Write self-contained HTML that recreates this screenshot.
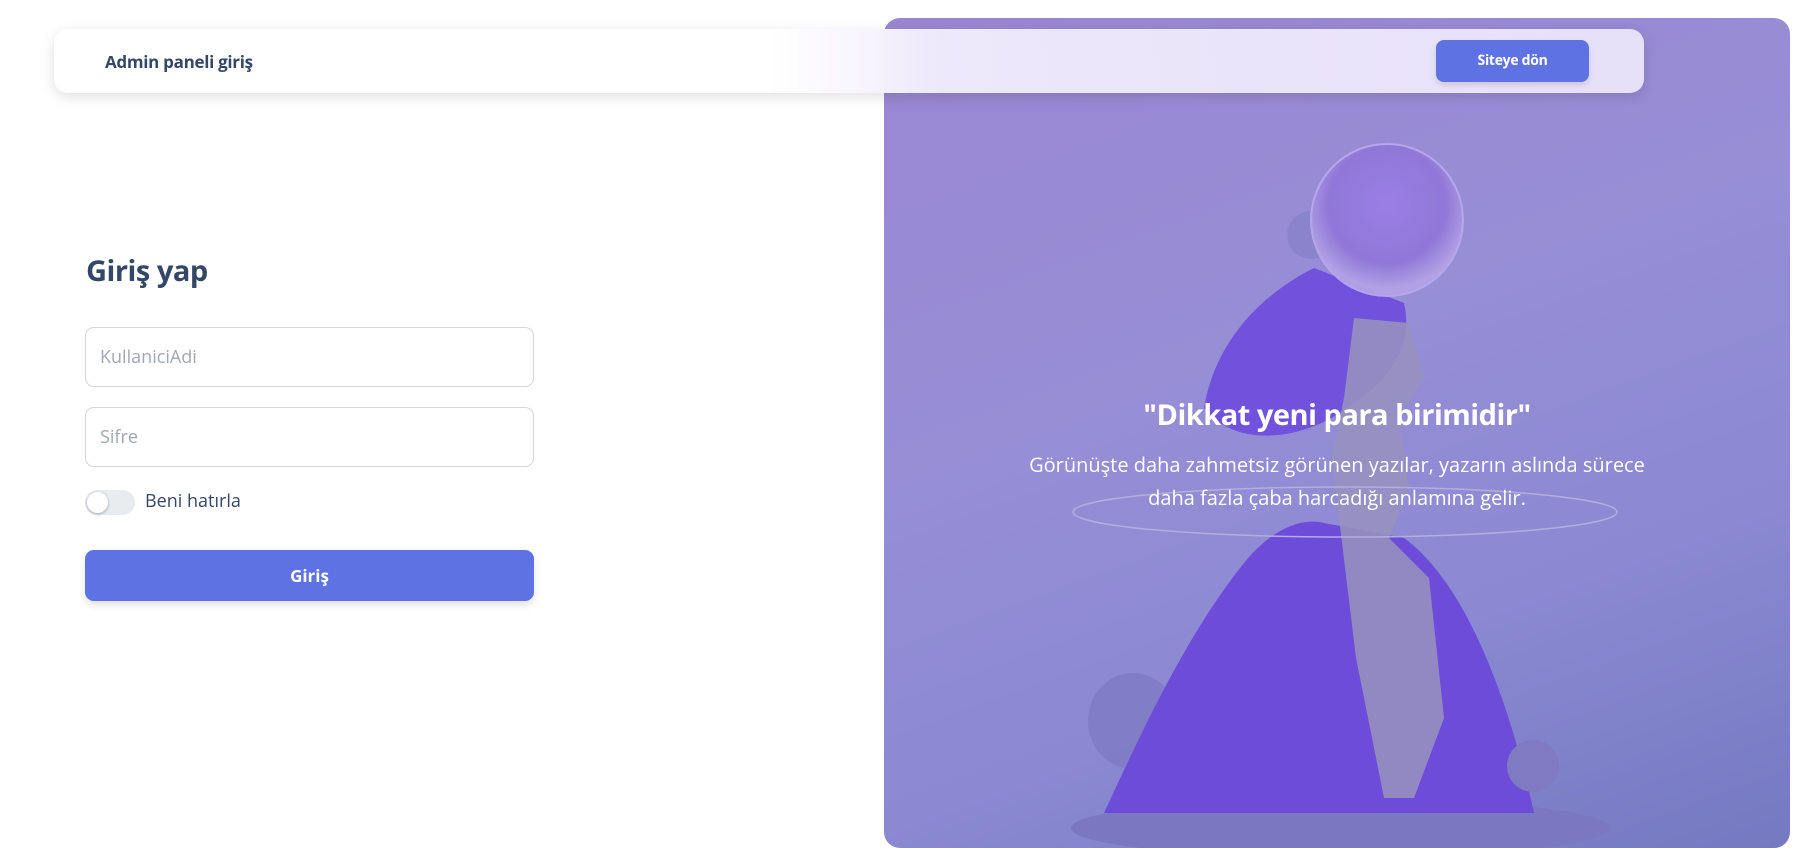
<!DOCTYPE html>
<html><head><meta charset="utf-8"><style>
*{box-sizing:border-box;margin:0;padding:0}
body{width:1794px;height:855px;background:#fff;position:relative;overflow:hidden;font-family:"Open Sans","Liberation Sans",sans-serif;color:#344767}
.panel{position:absolute;left:884px;top:18px;width:906px;height:830px;border-radius:16px;overflow:hidden;background:linear-gradient(160deg,#9a86d2 0%,#978ed6 40%,#8a89d2 70%,#7479c0 100%)}
.panel svg{position:absolute;left:0;top:0}
.nav{position:absolute;left:54px;top:29px;width:1590px;height:64px;border-radius:14px;background:linear-gradient(90deg,#fff 0%,#fff 45%,rgba(240,235,252,.97) 56%,rgba(236,230,252,.93) 100%);box-shadow:0 4px 14px rgba(0,0,0,.12)}
.nav .t{position:absolute;left:51px;top:21px;font-size:17px;font-weight:700;letter-spacing:-.3px;color:#344767}
.nav .b{position:absolute;left:1382px;top:11px;width:153px;height:42px;border-radius:8px;background:#5e72e4;color:#fff;font-size:14px;font-weight:700;text-align:center;line-height:42px;box-shadow:0 3px 6px rgba(0,0,0,.12);letter-spacing:-.3px}
h1{position:absolute;left:86px;top:251px;font-size:29px;font-weight:700;color:#344767;letter-spacing:-.5px}
.in{position:absolute;left:85px;width:449px;height:60px;border:1px solid #d2d6da;border-radius:9px;font-size:18px;color:#a0a8b4;padding-left:14px;line-height:58px}
.tg{position:absolute;left:85px;top:490px;width:50px;height:25px;border-radius:13px;background:#e9ecef}
.tg::after{content:"";position:absolute;left:2px;top:2px;width:21px;height:21px;border-radius:50%;background:#fff;box-shadow:0 1px 3px rgba(0,0,0,.3)}
.lb{position:absolute;left:145px;top:489px;font-size:18px;color:#344767}
.btn{position:absolute;left:85px;top:550px;width:449px;height:51px;border-radius:9px;background:#5e72e4;color:#fff;font-size:17px;font-weight:700;text-align:center;line-height:51px;box-shadow:0 4px 8px rgba(0,0,0,.12)}
.q{position:absolute;left:884px;width:906px;text-align:center;color:#fff}
</style></head><body>
<div class="panel">
<svg width="906" height="830" viewBox="0 0 906 830">
<defs><radialGradient id="sp" cx="50%" cy="40%" r="55%"><stop offset="0" stop-color="#9c7ee6"/><stop offset=".7" stop-color="#8f77d8"/><stop offset="1" stop-color="#b3a2e6"/></radialGradient></defs>
<ellipse cx="249" cy="703" rx="45" ry="48" fill="#7e7ac4" opacity=".8"/>
<circle cx="427" cy="217" r="24" fill="#8b84cc"/>
<ellipse cx="457" cy="810" rx="270" ry="30" fill="#7a78c0"/>
<path d="M220 795 C255 720 300 620 360 545 C390 508 420 500 440 505 L520 520 C575 560 620 660 650 795 Z" fill="#6c4cd8"/>
<path d="M320 390 C330 330 370 280 430 250 L520 285 C530 330 505 360 470 385 C420 425 350 430 320 390 Z" fill="#7052dc"/>
<path d="M470 300 L525 305 L540 360 L515 400 L525 470 L505 520 L545 560 L560 700 L530 780 L500 780 L472 640 L455 500 L448 440 L460 380 Z" fill="#9890c0" opacity=".9"/>
<circle cx="503" cy="202" r="76" fill="url(#sp)" stroke="#b8a8ee" stroke-width="2" opacity=".95"/>
<circle cx="649" cy="748" r="26" fill="#7f7ac2"/>
<ellipse cx="461" cy="494" rx="272" ry="25" fill="none" stroke="#b3aee0" stroke-width="1.5"/>
</svg>
</div>
<div class="nav"><div class="t">Admin paneli giriş</div><div class="b">Siteye dön</div></div>
<h1>Giriş yap</h1>
<div class="in" style="top:327px">KullaniciAdi</div>
<div class="in" style="top:407px">Sifre</div>
<div class="tg"></div><div class="lb">Beni hatırla</div>
<div class="btn">Giriş</div>
<div class="q" style="top:395px;font-size:29px;font-weight:700;letter-spacing:-.5px">"Dikkat yeni para birimidir"</div>
<div class="q" style="top:448px;font-size:20px;line-height:33px">Görünüşte daha zahmetsiz görünen yazılar, yazarın aslında sürece<br>daha fazla çaba harcadığı anlamına gelir.</div>
</body></html>
